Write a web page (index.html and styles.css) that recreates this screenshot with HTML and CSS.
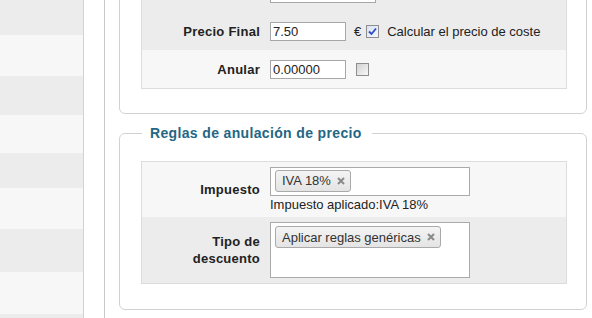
FILE: index.html
```html
<!DOCTYPE html>
<html lang="es">
<head>
  <meta charset="UTF-8">
  <meta name="viewport" content="width=device-width, initial-scale=1.0">
  <title>Precio</title>
  <link rel="stylesheet" href="styles.css">
</head>
<body>
  <div class="layout">
    <!-- Side menu -->
    <aside class="sidebar">
      <div class="side-row"></div>
      <div class="side-row"></div>
      <div class="side-row"></div>
      <div class="side-row"></div>
      <div class="side-row"></div>
      <div class="side-row"></div>
      <div class="side-row"></div>
      <div class="side-row"></div>
      <div class="side-row"></div>
    </aside>

    <main class="content">
      <!-- Price block -->
      <fieldset class="box box-price">
        <table class="form-table">
          <tr class="row-dark row-38">
            <th></th>
            <td><input class="text-input input-wide" type="text" value=""></td>
          </tr>
          <tr class="row-dark row-38">
            <th>Precio Final</th>
            <td>
              <div class="field">
                <input class="text-input" type="text" value="7.50">
                <span class="unit">€</span>
                <span class="check checked">
                  <svg width="11" height="11" viewBox="0 0 11 11"><path d="M2 5.5 L4.5 8 L9 2.5" fill="none" stroke="#2d4cc4" stroke-width="1.8"/></svg>
                </span>
                <span class="check-label">Calcular el precio de coste</span>
              </div>
            </td>
          </tr>
          <tr class="row-light row-38">
            <th>Anular</th>
            <td>
              <div class="field">
                <input class="text-input" type="text" value="0.00000">
                <span class="check check-alone"></span>
              </div>
            </td>
          </tr>
        </table>
      </fieldset>

      <!-- Override rules -->
      <fieldset class="box box-rules">
        <legend class="box-title">Reglas de anulación de precio</legend>
        <table class="form-table">
          <tr class="row-light row-tax">
            <th>Impuesto</th>
            <td>
              <div class="tag-box">
                <span class="tag">IVA 18%
                  <svg class="tag-close" width="8" height="8" viewBox="0 0 8 8"><path d="M1 1 L7 7 M7 1 L1 7" stroke="#8a8a8a" stroke-width="2"/></svg>
                </span>
              </div>
              <div class="hint">Impuesto aplicado:IVA 18%</div>
            </td>
          </tr>
          <tr class="row-dark row-discount">
            <th>Tipo de<br>descuento</th>
            <td>
              <div class="tag-box tag-box-tall">
                <span class="tag">Aplicar reglas genéricas
                  <svg class="tag-close" width="8" height="8" viewBox="0 0 8 8"><path d="M1 1 L7 7 M7 1 L1 7" stroke="#8a8a8a" stroke-width="2"/></svg>
                </span>
              </div>
            </td>
          </tr>
        </table>
      </fieldset>
    </main>
  </div>
</body>
</html>
```

FILE: styles.css
```css
body {
  margin: 0;
  font-family: "Liberation Sans", Arial, sans-serif;
  font-size: 13px;
  color: #222;
  background-color: #fff;
}

.layout {
  display: flex;
  min-height: 100vh;
}

/* Side menu stripes */
.sidebar {
  flex: none;
  width: 83px;
  background-color: #ececec;
  border-right: 1px solid #d3d3d3;
}

.side-row {
  height: 40px;
  background-color: #ececec;
}

.side-row:nth-child(even) {
  background-color: #f7f7f7;
}

.side-row:nth-child(1) { height: 35px; }
.side-row:nth-child(2) { height: 41px; }
.side-row:nth-child(3) { height: 39px; }
.side-row:nth-child(4) { height: 38px; }
.side-row:nth-child(5) { height: 35px; }
.side-row:nth-child(6) { height: 41px; }
.side-row:nth-child(7) { height: 43px; }
.side-row:nth-child(8) { height: 42px; }

.content {
  flex: 1;
  margin-left: 20px;
  border-left: 1px solid #c9c9c9;
  padding: 0 5px 0 14px;
}

/* Fieldsets */
.box {
  margin: 0;
  min-width: 0;
  border: 1px solid #d2d2d2;
  border-radius: 6px;
  padding: 12px 19px 24px 21px;
}

.box-price {
  margin-top: -40px;
}

.box-rules {
  margin-top: 11px;
  padding-top: 20px;
  padding-bottom: 25px;
}

.box-title {
  margin-left: 1px;
  padding: 0 10px 0 8px;
  font-size: 14px;
  line-height: 16px;
  font-weight: bold;
  letter-spacing: 0.35px;
  color: #246684;
}

/* Form table */
.form-table {
  width: 100%;
  border-collapse: separate;
  border-spacing: 0;
  border: 1px solid #dcdcdc;
}

.form-table th {
  width: 118px;
  padding: 0 10px 0 0;
  text-align: right;
  font-weight: bold;
  letter-spacing: 0.25px;
  line-height: 17px;
  vertical-align: middle;
}

.form-table td {
  padding: 0;
  vertical-align: middle;
}

.row-dark th,
.row-dark td {
  background-color: #ececec;
}

.row-light th,
.row-light td {
  background-color: #f7f7f7;
}

.row-38 { height: 38px; }
.row-tax { height: 55px; }
.row-discount { height: 66px; }

.field {
  display: flex;
  align-items: center;
}

.text-input {
  box-sizing: border-box;
  width: 76px;
  height: 19px;
  margin: 0;
  padding: 0 2px;
  border: 1px solid #a7a7a7;
  font-family: "Liberation Sans", Arial, sans-serif;
  font-size: 13px;
  color: #222;
  background-color: #fff;
  vertical-align: middle;
}

.input-wide {
  width: 106px;
}

.unit {
  margin-left: 8px;
}

.check {
  box-sizing: border-box;
  display: inline-flex;
  align-items: center;
  justify-content: center;
  width: 13px;
  height: 13px;
  margin-left: 5px;
  border: 1px solid #8e8e8e;
  background: linear-gradient(135deg, #d2d2d2, #f7f7f7);
}

.check.checked {
  background: linear-gradient(135deg, #d9e1f2, #f4f6fb);
}

.check-alone {
  margin-left: 10px;
}

.check-label {
  margin-left: 8px;
}

/* Multi-select tags */
.tag-box {
  box-sizing: border-box;
  width: 200px;
  height: 29px;
  padding: 2px 4px;
  border: 1px solid #aaa;
  background-color: #fff;
}

.tag-box-tall {
  height: 56px;
  padding-top: 3px;
}

.tag {
  box-sizing: border-box;
  display: inline-flex;
  align-items: center;
  height: 22px;
  padding: 0 5px 0 6px;
  border: 1px solid #aaa;
  border-radius: 3px;
  background: linear-gradient(#f4f4f4, #e4e4e4);
  color: #333;
}

.tag-close {
  margin-left: 6px;
}

.hint {
  line-height: 16px;
  margin-top: 1px;
}
```
